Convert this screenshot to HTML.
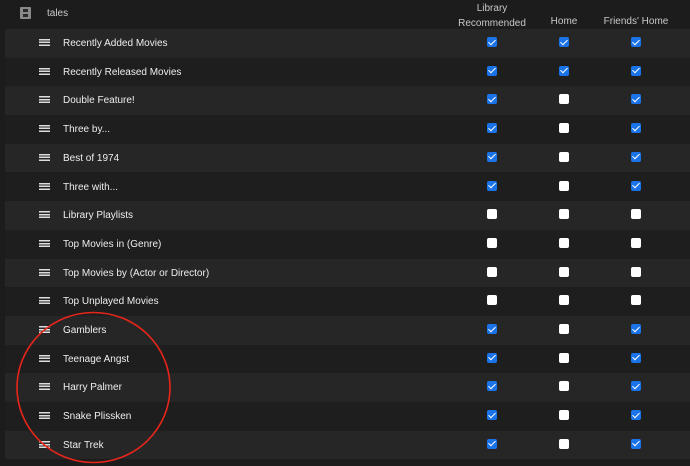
<html><head><style>
body{margin:0;width:690px;height:466px;background:#1c1c1c;font-family:"Liberation Sans",sans-serif;overflow:hidden;position:relative}
.h{position:absolute;color:#c8c8c8;font-size:10px;text-align:center}
.row{position:absolute;left:5px;width:685px;height:28.7px;color:#eee;font-size:10px}
.row span{position:absolute;left:58px;top:9px}
.ic{position:absolute;left:34px;top:10px;width:11px;height:7px;background:linear-gradient(#ddd 0,#ddd 1.5px,transparent 1.5px,transparent 2.75px,#ddd 2.75px,#ddd 4.25px,transparent 4.25px,transparent 5.5px,#ddd 5.5px)}
.cb{position:absolute;top:8px;width:10px;height:10px;border-radius:2px}
.on{background:#1a73e8}
.on:after{content:"";position:absolute;left:3px;top:0.5px;width:3px;height:6px;border:solid #fff;border-width:0 1.6px 1.6px 0;transform:rotate(45deg)}
.off{background:#fff}
</style></head><body>
<div style="position:absolute;left:20px;top:7px;width:11px;height:12px;background:#8a8a8a;border-radius:1px"><div style="position:absolute;left:3px;top:2px;width:5px;height:3px;background:#2a2a2a"></div><div style="position:absolute;left:3px;top:7px;width:5px;height:3px;background:#2a2a2a"></div></div>
<div style="position:absolute;left:47px;top:8px;color:#ccc;font-size:10px">tales</div>
<div class="h" style="left:452px;top:1px;width:80px;line-height:15px">Library<br>Recommended</div>
<div class="h" style="left:534px;top:16px;width:60px">Home</div>
<div class="h" style="left:596px;top:16px;width:80px">Friends' Home</div>
<div id="rows"></div>
<svg style="position:absolute;left:0;top:0" width="690" height="466"><ellipse cx="93.5" cy="387.5" rx="76.5" ry="75" fill="none" stroke="#e8251a" stroke-width="1.6"/></svg>
<script>
var d=[["Recently Added Movies",1,1,1],["Recently Released Movies",1,1,1],["Double Feature!",1,0,1],["Three by...",1,0,1],["Best of 1974",1,0,1],["Three with...",1,0,1],["Library Playlists",0,0,0],["Top Movies in (Genre)",0,0,0],["Top Movies by (Actor or Director)",0,0,0],["Top Unplayed Movies",0,0,0],["Gamblers",1,0,1],["Teenage Angst",1,0,1],["Harry Palmer",1,0,1],["Snake Plissken",1,0,1],["Star Trek",1,0,1]];
var h="";d.forEach(function(r,i){h+='<div class="row" style="top:'+(29+i*28.7)+'px;background:'+(i%2?'#1e1e1e':'#262626')+'"><div class="ic"></div><span>'+r[0]+'</span>';[482,554,626].forEach(function(x,j){h+='<div class="cb '+(r[j+1]?'on':'off')+'" style="left:'+x+'px"></div>'});h+='</div>'});
document.getElementById("rows").innerHTML=h;
</script>
</body></html>
